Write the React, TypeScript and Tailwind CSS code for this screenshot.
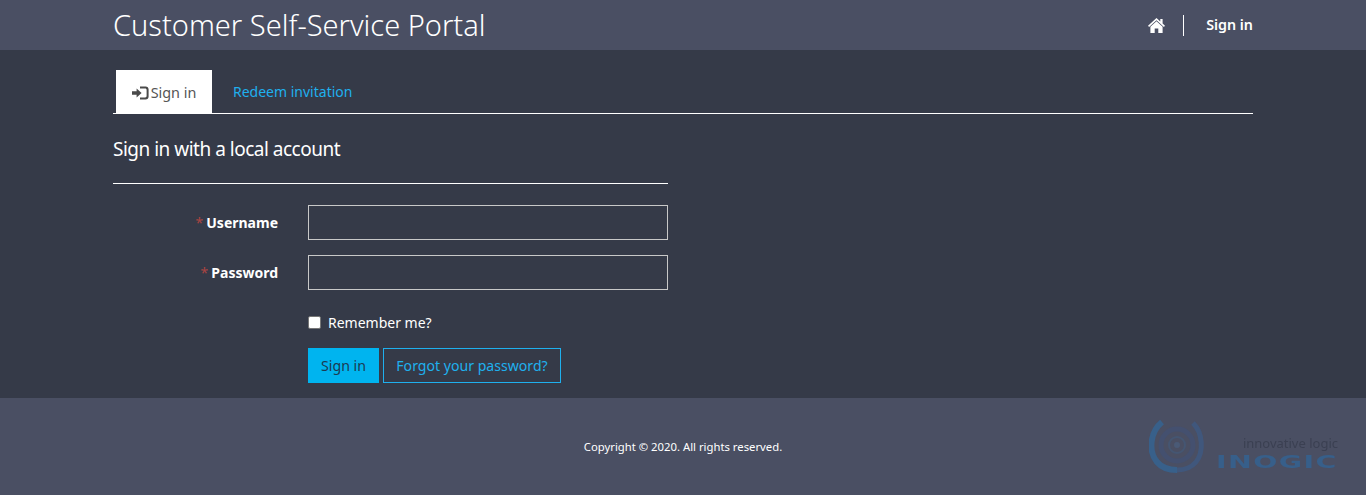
import type { ReactNode } from "react";

const FONT = "font-['Noto_Sans','Open_Sans',sans-serif]";

function HomeIcon() {
  return (
    <svg width="17" height="15" viewBox="0 0 17 15" fill="white" aria-hidden="true">
      <path d="M8.5 0 L12.3 3.4 V1 H14.6 V5.5 L17 7.7 L15.9 8.9 L8.5 2.3 L1.1 8.9 L0 7.7 Z" />
      <path d="M8.5 3.3 L14.6 8.8 V15 H10.3 V10.4 H6.7 V15 H2.4 V8.8 Z" />
    </svg>
  );
}

function LoginIcon() {
  return (
    <svg width="17" height="14" viewBox="0 0 17 14" fill="#4a4a4a" aria-hidden="true">
      <path d="M0 5.2 H4.6 V2.4 L9.6 7 L4.6 11.6 V8.8 H0 Z" />
      <path d="M8 0.6 H13.6 C15.4 0.6 16.6 1.8 16.6 3.6 V10.4 C16.6 12.2 15.4 13.4 13.6 13.4 H8 V11.4 H13.2 C14 11.4 14.6 10.8 14.6 10 V4 C14.6 3.2 14 2.6 13.2 2.6 H8 Z" />
    </svg>
  );
}

function InogicLogo() {
  return (
    <div className="relative h-[56px] w-[190px] blur-[0.6px]">
      <svg width="56" height="56" viewBox="0 0 56 56" fill="none" aria-hidden="true">
        <path d="M13 4 C1 14 -1 33 8 44 C13 50 20 52 28 52" stroke="#38608a" strokeWidth="6" />
        <path d="M28 52 C36 52 42 50 47 44 C55 34 54 15 44 5" stroke="#40577c" strokeWidth="5" />
        <circle cx="28" cy="27" r="16" stroke="#44506f" strokeWidth="5" />
        <circle cx="28" cy="27" r="8" stroke="#455672" strokeWidth="2" />
        <circle cx="28" cy="27" r="3" fill="#4a5a76" />
      </svg>
      <span className="absolute top-[18px] right-[1px] text-[13px] leading-[14px] text-[#3b4052]">innovative logic</span>
      <span className="absolute top-[36px] right-[1px] origin-right scale-x-[1.42] scale-y-[0.92] font-['DejaVu_Sans',sans-serif] text-[20px] leading-[16px] font-bold tracking-[1px] text-[#375f8a]">
        INOGIC
      </span>
    </div>
  );
}

function FieldRow({ label }: { label: string }) {
  return (
    <div className="flex h-[35px] items-center">
      <label className="w-[165px] text-right text-[14px] font-bold text-white">
        <span className="mr-[3px] font-normal text-[#a94442]">*</span>
        {label}
      </label>
      <input
        type={label === "Password" ? "password" : "text"}
        className="ml-[30px] h-[35px] w-[360px] border border-[#c8c8c8] bg-transparent"
      />
    </div>
  );
}

function Container({ children, className }: { children: ReactNode; className?: string }) {
  return <div className={`mx-auto w-[1140px] ${className ?? ""}`}>{children}</div>;
}

export default function App() {
  return (
    <div className={`${FONT} flex h-[495px] flex-col bg-[#353a48]`}>
      {/* Header */}
      <header className="h-[50px] shrink-0 bg-[#4a4f63]">
        <Container className="flex h-full items-center justify-between">
          <h1 className="text-[29px] leading-[50px] font-light text-white">Customer Self-Service Portal</h1>
          <nav className="flex items-center">
            <HomeIcon />
            <span className="ml-[18px] h-[21px] w-px bg-white" />
            <a className="ml-[22px] text-[14.3px] font-semibold text-white">Sign in</a>
          </nav>
        </Container>
      </header>

      {/* Main */}
      <main className="flex-1 pt-[20px]">
        <Container>
          <div className="flex h-[44px] border-b border-white pl-[3px]">
            <div className="flex h-[44px] w-[96px] items-center justify-center gap-[2px] bg-white pt-[2px] text-[14.4px] text-[#555]">
              <LoginIcon />
              <span>Sign in</span>
            </div>
            <a className="ml-[21px] pt-[11px] text-[14px] text-[#1fb0ee]">Redeem invitation</a>
          </div>

          <div className="w-[555px]">
            <h2 className="mt-[20px] text-[19px] leading-[30px] tracking-[-0.5px] text-white">Sign in with a local account</h2>
            <div className="mt-[19px] h-px bg-white" />

            <form className="mt-[21px] flex flex-col gap-[15px]">
              <FieldRow label="Username" />
              <FieldRow label="Password" />
            </form>

            <div className="mt-[23px] ml-[195px] flex h-[20px] items-center">
              <span className="mt-[-1px] h-[13px] w-[13px] rounded-[2px] border border-[#767676] bg-white" />
              <span className="mt-[-2px] ml-[7px] text-[14px] text-white">Remember me?</span>
            </div>

            <div className="mt-[15px] ml-[195px] flex gap-[4px]">
              <button className="h-[35px] w-[71px] bg-[#00b4ef] text-[14.2px] text-[#1c3a52]">Sign in</button>
              <button className="h-[35px] w-[178px] border border-[#1fb0ee] text-[14.1px] text-[#1fb0ee]">
                Forgot your password?
              </button>
            </div>
          </div>
        </Container>
      </main>

      {/* Footer */}
      <footer className="relative flex h-[97px] shrink-0 items-center justify-center bg-[#4a4f63]">
        <p className="mt-[2px] text-[11.3px] text-white">Copyright © 2020. All rights reserved.</p>
        <div className="absolute top-[20px] left-[1149px]">
          <InogicLogo />
        </div>
      </footer>
    </div>
  );
}
